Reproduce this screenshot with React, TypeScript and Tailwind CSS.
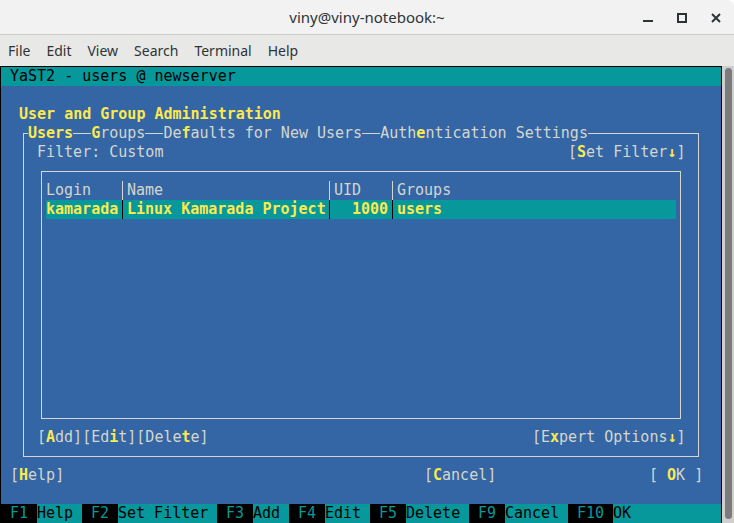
function Key({ children }: { children: React.ReactNode }) {
  return <span className="font-bold text-[#fce94f]">{children}</span>
}

function Sep({ dark }: { dark?: boolean }) {
  return (
    <div className="w-[9px] flex justify-center">
      <div className={dark ? 'w-px bg-black' : 'w-px bg-[#d3d7cf]'} />
    </div>
  )
}

function Terminal() {
  return (
    <div className="grid grid-cols-[repeat(80,9px)] grid-rows-[repeat(24,19px)] bg-[#3465a4] text-[15px] leading-[19px] text-[#d3d7cf] whitespace-pre [font-family:'DejaVu_Sans_Mono',monospace]">
      {/* frames first so text paints over them */}
      <div className="col-start-3 col-span-76 row-start-4 row-span-18 mx-[4px] my-[9px] border border-[#d3d7cf]" />
      <div className="col-start-5 col-span-72 row-start-6 row-span-14 mx-[4px] my-[9px] border border-[#d3d7cf]" />

      <div className="col-start-1 col-span-80 row-start-1 bg-[#06989a] text-black pl-[9px]">YaST2 - users @ newserver</div>

      <div className="col-start-3 col-span-40 row-start-3 font-bold text-[#fce94f]">User and Group Administration</div>

      <div className="col-start-4 col-span-62 row-start-4">
        <span className="bg-[#3465a4] font-bold text-[#fce94f]">Users</span>
        {'  '}
        <span className="bg-[#3465a4]"><Key>G</Key>roups</span>
        {'  '}
        <span className="bg-[#3465a4]">De<Key>f</Key>aults for New Users</span>
        {'  '}
        <span className="bg-[#3465a4]">Auth<Key>e</Key>ntication Settings</span>
      </div>

      <div className="col-start-5 col-span-20 row-start-5">Filter: Custom</div>
      <div className="col-start-64 col-span-13 row-start-5">[<Key>S</Key>et Filter<Key>↓</Key>]</div>

      <div className="col-start-6 col-span-70 row-start-7 flex">
        <div className="w-[72px]">Login</div>
        <Sep />
        <div className="w-[198px]">Name</div>
        <Sep />
        <div className="w-[54px]">UID</div>
        <Sep />
        <div className="flex-1">Groups</div>
      </div>

      <div className="col-start-6 col-span-70 row-start-8 flex bg-[#06989a] font-bold text-[#fce94f]">
        <div className="w-[72px]">kamarada</div>
        <Sep dark />
        <div className="w-[198px]">Linux Kamarada Project</div>
        <Sep dark />
        <div className="w-[54px] text-right">1000</div>
        <Sep dark />
        <div className="flex-1">users</div>
      </div>

      <div className="col-start-5 col-span-20 row-start-20">
        [<Key>A</Key>dd][Ed<Key>i</Key>t][Dele<Key>t</Key>e]
      </div>
      <div className="col-start-60 col-span-17 row-start-20">[E<Key>x</Key>pert Options<Key>↓</Key>]</div>

      <div className="col-start-2 col-span-6 row-start-22">[<Key>H</Key>elp]</div>
      <div className="col-start-48 col-span-8 row-start-22">[<Key>C</Key>ancel]</div>
      <div className="col-start-73 col-span-6 row-start-22">[ <Key>O</Key>K ]</div>

      <div className="col-start-1 col-span-80 row-start-24 flex">
        <div className="w-[36px] bg-black text-[#06989a]"> F1 </div>
        <div className="w-[45px] bg-[#06989a] text-black">Help </div>
        <div className="w-[36px] bg-black text-[#06989a]"> F2 </div>
        <div className="w-[99px] bg-[#06989a] text-black">Set Filter </div>
        <div className="w-[36px] bg-black text-[#06989a]"> F3 </div>
        <div className="w-[36px] bg-[#06989a] text-black">Add </div>
        <div className="w-[36px] bg-black text-[#06989a]"> F4 </div>
        <div className="w-[45px] bg-[#06989a] text-black">Edit </div>
        <div className="w-[36px] bg-black text-[#06989a]"> F5 </div>
        <div className="w-[63px] bg-[#06989a] text-black">Delete </div>
        <div className="w-[36px] bg-black text-[#06989a]"> F9 </div>
        <div className="w-[63px] bg-[#06989a] text-black">Cancel </div>
        <div className="w-[45px] bg-black text-[#06989a]"> F10 </div>
        <div className="flex-1 bg-[#06989a] text-black">OK</div>
      </div>
    </div>
  )
}

export default function App() {
  return (
    <div className="w-[734px] h-[523px] overflow-hidden flex flex-col bg-[#e8e8e7] rounded-tr-[8px] [font-family:'Noto_Sans',sans-serif] text-[#2e3436]">
      <div className="h-[35px] shrink-0 grid grid-cols-[1fr_auto_1fr] items-center bg-[#f2f2f2] border-b border-[#cbcbc9]">
        <div />
        <div className="text-[15px]">viny@viny-notebook:~</div>
        <div className="flex justify-end items-center gap-[24px] pr-[13px] mt-[1px]">
          <svg width="10" height="10" viewBox="0 0 10 10">
            <rect x="0" y="7" width="10" height="2" fill="#2e3436" />
          </svg>
          <svg width="10" height="10" viewBox="0 0 10 10">
            <rect x="1" y="1" width="8" height="8" fill="none" stroke="#2e3436" strokeWidth="2" />
          </svg>
          <svg width="10" height="10" viewBox="0 0 10 10">
            <path d="M1 1 L9 9 M9 1 L1 9" stroke="#2e3436" strokeWidth="2" />
          </svg>
        </div>
      </div>
      <div className="h-[31px] shrink-0 flex items-center gap-[16px] px-[8px] pb-[1px] text-[14px]">
        <span>File</span>
        <span>Edit</span>
        <span>View</span>
        <span>Search</span>
        <span>Terminal</span>
        <span>Help</span>
      </div>
      <div className="flex">
        <div className="border-x border-t border-black">
          <Terminal />
        </div>
        <div className="flex-1 bg-[#cfcfcf] pt-[2px] pb-[4px] flex justify-center">
          <div className="w-[7px] h-[451px] rounded-full bg-[#7b7b7b]" />
        </div>
      </div>
    </div>
  )
}
